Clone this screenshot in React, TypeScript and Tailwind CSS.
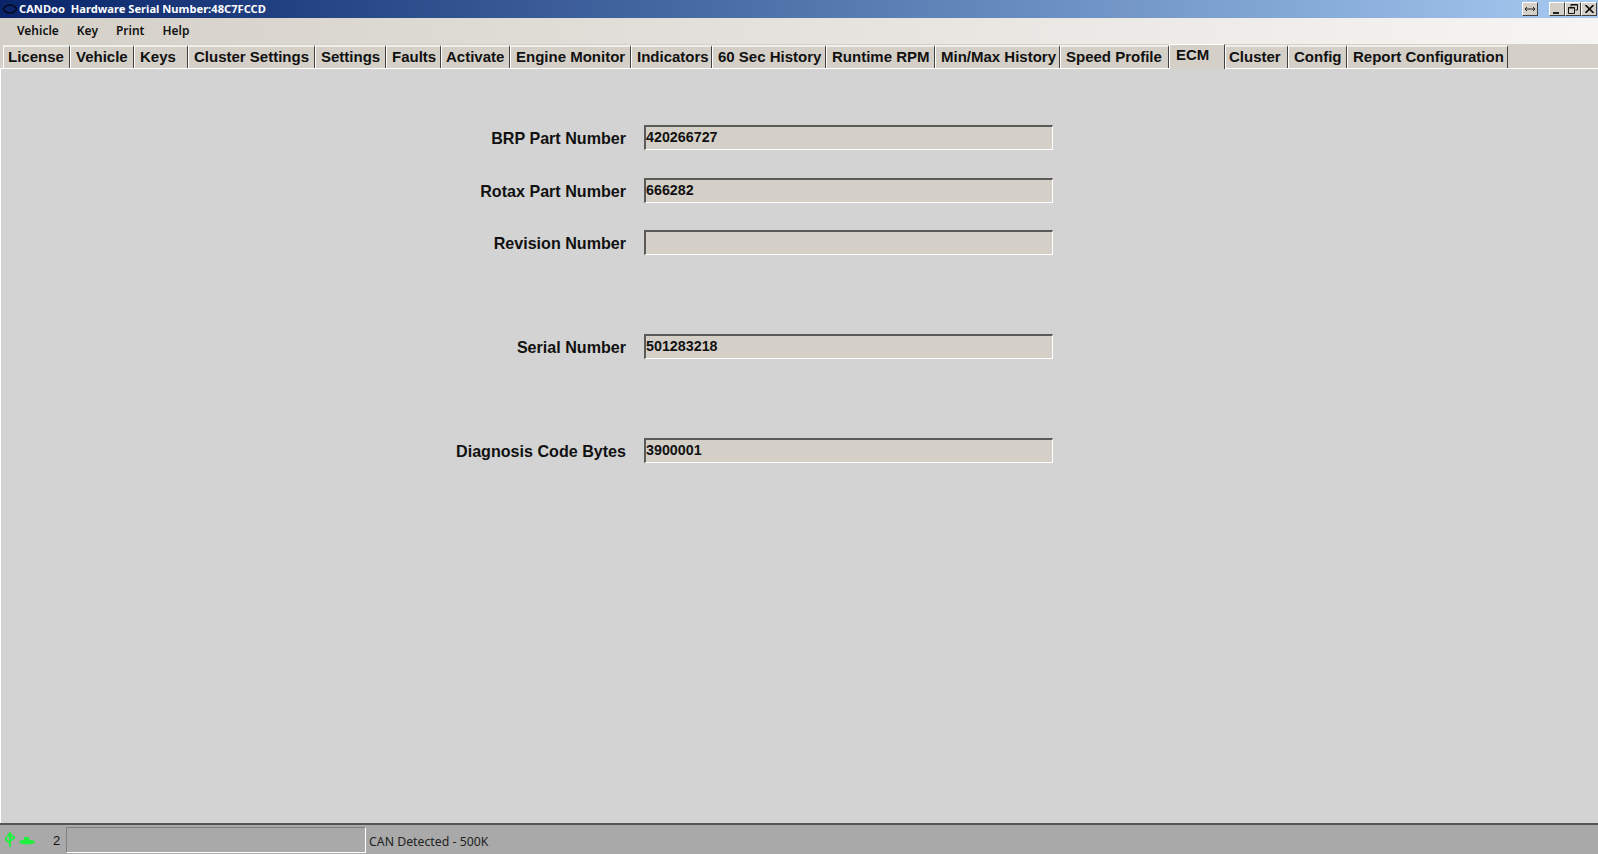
const tabs = [
  { name: 'License', w: 'w-[67px] pl-[4px]' },
  { name: 'Vehicle', w: 'w-[64px] pl-[5px]' },
  { name: 'Keys', w: 'w-[54px] pl-[5px]' },
  { name: 'Cluster Settings', w: 'w-[127px] pl-[5px]' },
  { name: 'Settings', w: 'w-[71px] pl-[5px]' },
  { name: 'Faults', w: 'w-[55px] pl-[5px]' },
  { name: 'Activate', w: 'w-[69px] pl-[4px]' },
  { name: 'Engine Monitor', w: 'w-[121px] pl-[5px]' },
  { name: 'Indicators', w: 'w-[81px] pl-[5px]' },
  { name: '60 Sec History', w: 'w-[114px] pl-[5px]' },
  { name: 'Runtime RPM', w: 'w-[109px] pl-[5px]' },
  { name: 'Min/Max History', w: 'w-[125px] pl-[5px]' },
  { name: 'Speed Profile', w: 'w-[109px] pl-[5px]' },
  { name: 'ECM', w: 'w-[56px] pl-[6px]', active: true },
  { name: 'Cluster', w: 'w-[63px] pl-[3px]' },
  { name: 'Config', w: 'w-[59px] pl-[5px]' },
  { name: 'Report Configuration', w: 'w-[161px] pl-[5px]' },
];

const menus = ['Vehicle', 'Key', 'Print', 'Help'];

function Field({ label, value, className }: { label: string; value: string; className: string }) {
  return (
    <div className={`flex items-center gap-[18px] ${className}`}>
      <div className="w-[626px] text-right text-[16.1px] leading-none font-bold text-[#111] pt-[1px]">{label}</div>
      <div className="w-[409px] h-[25px] bg-[#d4d0c8] border-t-2 border-l-2 border-r border-b border-t-[#5a5a58] border-l-[#5a5a58] border-r-white border-b-white text-[14.3px] leading-[21px] font-bold text-[#111]">
        {value}
      </div>
    </div>
  );
}

function WinButton({ children, className }: { children: React.ReactNode; className?: string }) {
  return (
    <div className={`w-[16px] h-[14px] bg-[#d4d0c8] border border-t-white border-l-white border-r-[#404040] border-b-[#404040] flex items-center justify-center ${className ?? ''}`}>
      {children}
    </div>
  );
}

export default function App() {
  return (
    <div className="w-[1598px] h-[854px] overflow-hidden flex flex-col bg-[#d3d3d3] font-['Liberation_Sans',sans-serif]">
      {/* title bar */}
      <div className="h-[18px] flex items-center justify-between bg-gradient-to-r from-[#0a246a] to-[#a6caf0] pr-[1px]">
        <div className="flex items-center">
          <svg width="17" height="10" viewBox="0 0 17 10" className="ml-[2px]">
            <path d="M1 5 L4 2 Q8 0 12 2 L15 5 M1 5 L4 8 Q8 10 12 8 L15 5" fill="none" stroke="#050a20" strokeWidth="1.6" />
          </svg>
          <span className="whitespace-pre text-[11.15px] leading-none font-bold text-white font-['Noto_Sans',sans-serif] -mt-[1px]">CANDoo  Hardware Serial Number:48C7FCCD</span>
        </div>
        <div className="flex items-center">
          <WinButton className="mr-[11px]">
            <svg width="10" height="6" viewBox="0 0 10 6"><path d="M0 3h10M2 1L0 3l2 2M8 1l2 2-2 2" fill="none" stroke="#222" /></svg>
          </WinButton>
          <WinButton>
            <div className="w-[6px] h-[2px] bg-[#222] mt-[7px] mr-[2px]" />
          </WinButton>
          <WinButton>
            <svg width="10" height="10" viewBox="0 0 10 10"><path d="M3 2.5V0.5H9.5V6H7.5M0.5 3.5H6.5V9.5H0.5Z M3 1H9.5 M0.5 4H6.5" fill="none" stroke="#111" /></svg>
          </WinButton>
          <WinButton>
            <svg width="9" height="8" viewBox="0 0 9 8"><path d="M0.5 0L8.5 8M8.5 0L0.5 8" fill="none" stroke="#111" strokeWidth="1.6" /></svg>
          </WinButton>
        </div>
      </div>

      {/* menu bar */}
      <div className="h-[26px] flex items-center pl-[17px] gap-[18px] bg-gradient-to-r from-[#d4d0c8] to-[#f6f5f3] text-[12px] leading-none font-semibold text-[#111] font-['Noto_Sans',sans-serif]">
        {menus.map((m) => (
          <span key={m}>{m}</span>
        ))}
      </div>

      {/* tab strip */}
      <div className="h-[25px] flex items-end pl-[3px] bg-[#d4d0c8] border-b border-white">
        {tabs.map((t) =>
          t.active ? (
            <div key={t.name} className={`${t.w} h-[25px] -mb-[1px] bg-[#d4d0c8] border-t border-l border-white border-r border-r-[#404040] text-[15px] leading-[20px] font-bold text-[#111]`}>
              {t.name}
            </div>
          ) : (
            <div key={t.name} className={`${t.w} h-[23px] border-t-2 border-l border-white border-t-[#eeeeea] border-r border-r-[#404040] text-[15px] leading-[19px] font-bold text-[#111] whitespace-nowrap`}>
              {t.name}
            </div>
          ),
        )}
      </div>

      {/* form */}
      <div className="flex-1 border-l border-white">
        <Field label="BRP Part Number" value="420266727" className="mt-[56px] -ml-[1px]" />
        <Field label="Rotax Part Number" value="666282" className="mt-[28px] -ml-[1px]" />
        <Field label="Revision Number" value="" className="mt-[27px] -ml-[1px]" />
        <Field label="Serial Number" value="501283218" className="mt-[79px] -ml-[1px]" />
        <Field label="Diagnosis Code Bytes" value="3900001" className="mt-[79px] -ml-[1px]" />
      </div>

      {/* status bar */}
      <div className="h-[31px] flex items-end bg-[#a9a9a9] border-t-2 border-t-[#555] border-b border-b-[#a9a9a9]">
        <div className="w-[66px] h-[26px] flex items-center">
          <svg width="34" height="16" viewBox="0 0 34 16" className="ml-[3px]">
            <path d="M7 1V15M7 1L5 4H9ZM7 11L3 8V5M7 9L11 6V4" fill="none" stroke="#22f040" strokeWidth="2" />
            <ellipse cx="24" cy="10" rx="8" ry="2.5" fill="#22f040" />
            <rect x="21" y="5" width="5" height="4" fill="#22f040" />
          </svg>
          <span className="ml-[16px] text-[13px] leading-none text-[#111]">2</span>
        </div>
        <div className="w-[300px] h-[26px] border border-t-[#808080] border-l-[#808080] border-r-white border-b-white" />
        <div className="h-[26px] pl-[3px] text-[12.3px] leading-[29px] text-[#222] font-['Noto_Sans',sans-serif]">CAN Detected - 500K</div>
      </div>
    </div>
  );
}
